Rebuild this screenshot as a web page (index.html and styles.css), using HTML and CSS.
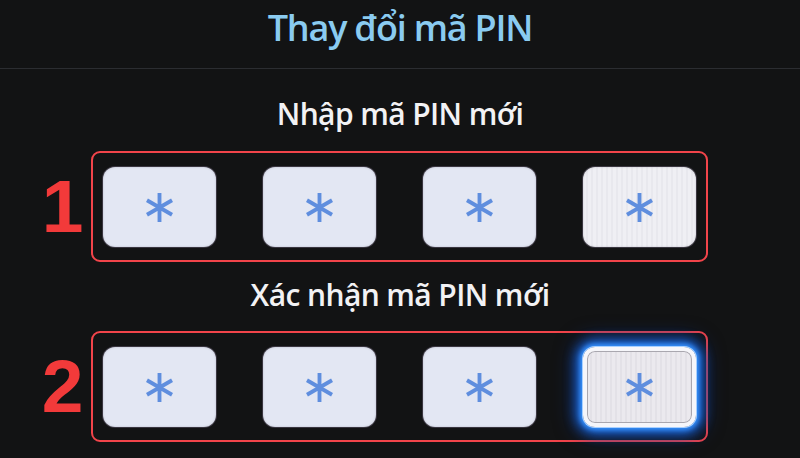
FILE: index.html
```html
<!DOCTYPE html>
<html lang="vi">
<head>
<meta charset="utf-8">
<title>Thay đổi mã PIN</title>
<link rel="stylesheet" href="styles.css">
</head>
<body>
<div class="screen">
  <header class="header"><h1 class="title">Thay đổi mã PIN</h1></header>
  <div class="divider"></div>

  <p class="label label-first">Nhập mã PIN mới</p>
  <div class="row">
    <div class="num">1</div>
    <div class="box">
      <div class="tile"><svg class="ast" viewBox="0 0 28 30"><path d="M14 0V30M1 7.5L27 22.5M1 22.5L27 7.5"/></svg></div>
      <div class="tile"><svg class="ast" viewBox="0 0 28 30"><path d="M14 0V30M1 7.5L27 22.5M1 22.5L27 7.5"/></svg></div>
      <div class="tile"><svg class="ast" viewBox="0 0 28 30"><path d="M14 0V30M1 7.5L27 22.5M1 22.5L27 7.5"/></svg></div>
      <div class="tile tile-striped"><svg class="ast" viewBox="0 0 28 30"><path d="M14 0V30M1 7.5L27 22.5M1 22.5L27 7.5"/></svg></div>
    </div>
  </div>

  <p class="label label-second">Xác nhận mã PIN mới</p>
  <div class="row">
    <div class="num">2</div>
    <div class="box">
      <div class="tile"><svg class="ast" viewBox="0 0 28 30"><path d="M14 0V30M1 7.5L27 22.5M1 22.5L27 7.5"/></svg></div>
      <div class="tile"><svg class="ast" viewBox="0 0 28 30"><path d="M14 0V30M1 7.5L27 22.5M1 22.5L27 7.5"/></svg></div>
      <div class="tile"><svg class="ast" viewBox="0 0 28 30"><path d="M14 0V30M1 7.5L27 22.5M1 22.5L27 7.5"/></svg></div>
      <div class="tile tile-focus"><svg class="ast" viewBox="0 0 28 30"><path d="M14 0V30M1 7.5L27 22.5M1 22.5L27 7.5"/></svg></div>
    </div>
  </div>
</div>
</body>
</html>
```

FILE: styles.css
```css
html, body {
  margin: 0;
  padding: 0;
  background: #111213;
}

.screen {
  width: 800px;
  height: 458px;
  overflow: hidden;
  background: #121314;
  font-family: "Open Sans", "DejaVu Sans", sans-serif;
}

.header {
  height: 68px;
  padding-top: 4px;
  box-sizing: border-box;
  display: flex;
  justify-content: center;
}

.title {
  margin: 0;
  font-size: 36px;
  line-height: 48px;
  font-weight: 600;
  color: #8acbf0;
  letter-spacing: -1.2px;
}

.divider {
  height: 1px;
  background: #2b2d31;
}

.label {
  margin: 0;
  text-align: center;
  color: #f2f2f4;
  font-size: 30px;
  font-weight: 600;
  line-height: 40px;
  letter-spacing: -0.6px;
}

.label-first {
  margin-top: 25px;
  margin-bottom: 17px;
}

.label-second {
  margin-top: 13px;
  margin-bottom: 16px;
}

.row {
  display: flex;
  align-items: stretch;
}

.num {
  width: 91px;
  box-sizing: border-box;
  padding-left: 34px;
  display: flex;
  align-items: center;
  justify-content: center;
  font-family: "Liberation Sans", Arial, sans-serif;
  font-weight: 700;
  font-size: 75px;
  line-height: 1;
  color: #f23a3a;
}

.box {
  width: 617px;
  height: 111px;
  box-sizing: border-box;
  border: 2px solid #f2444a;
  border-radius: 9px;
  padding: 14px 10px 0 10px;
  display: flex;
  justify-content: space-between;
  align-items: flex-start;
}

.tile {
  width: 113px;
  height: 80px;
  box-sizing: border-box;
  border-radius: 12px;
  background: #e3e7f3;
  box-shadow: 0 0 0 1px #3a3640, inset 0 0 2px rgba(90, 90, 110, 0.35);
  display: flex;
  align-items: center;
  justify-content: center;
}

.tile-striped {
  background: repeating-linear-gradient(90deg, #efeff4 0 3px, #e8e8ee 3px 5px);
}

.tile-focus {
  border: 4px solid #f6f6fa;
  background: repeating-linear-gradient(90deg, #ebe9ee 0 3px, #e3e1e7 3px 5px);
  box-shadow:
    inset 0 0 0 1px #a9a7af,
    0 0 0 1px #a8d0ff,
    0 0 5px 3px #3a95ff,
    0 0 12px 7px #1a62d0,
    0 0 20px 9px rgba(10, 50, 140, 0.6);
}

.ast {
  width: 27px;
  height: 29px;
  fill: none;
  stroke: #5f8ede;
  stroke-width: 4;
}
```
